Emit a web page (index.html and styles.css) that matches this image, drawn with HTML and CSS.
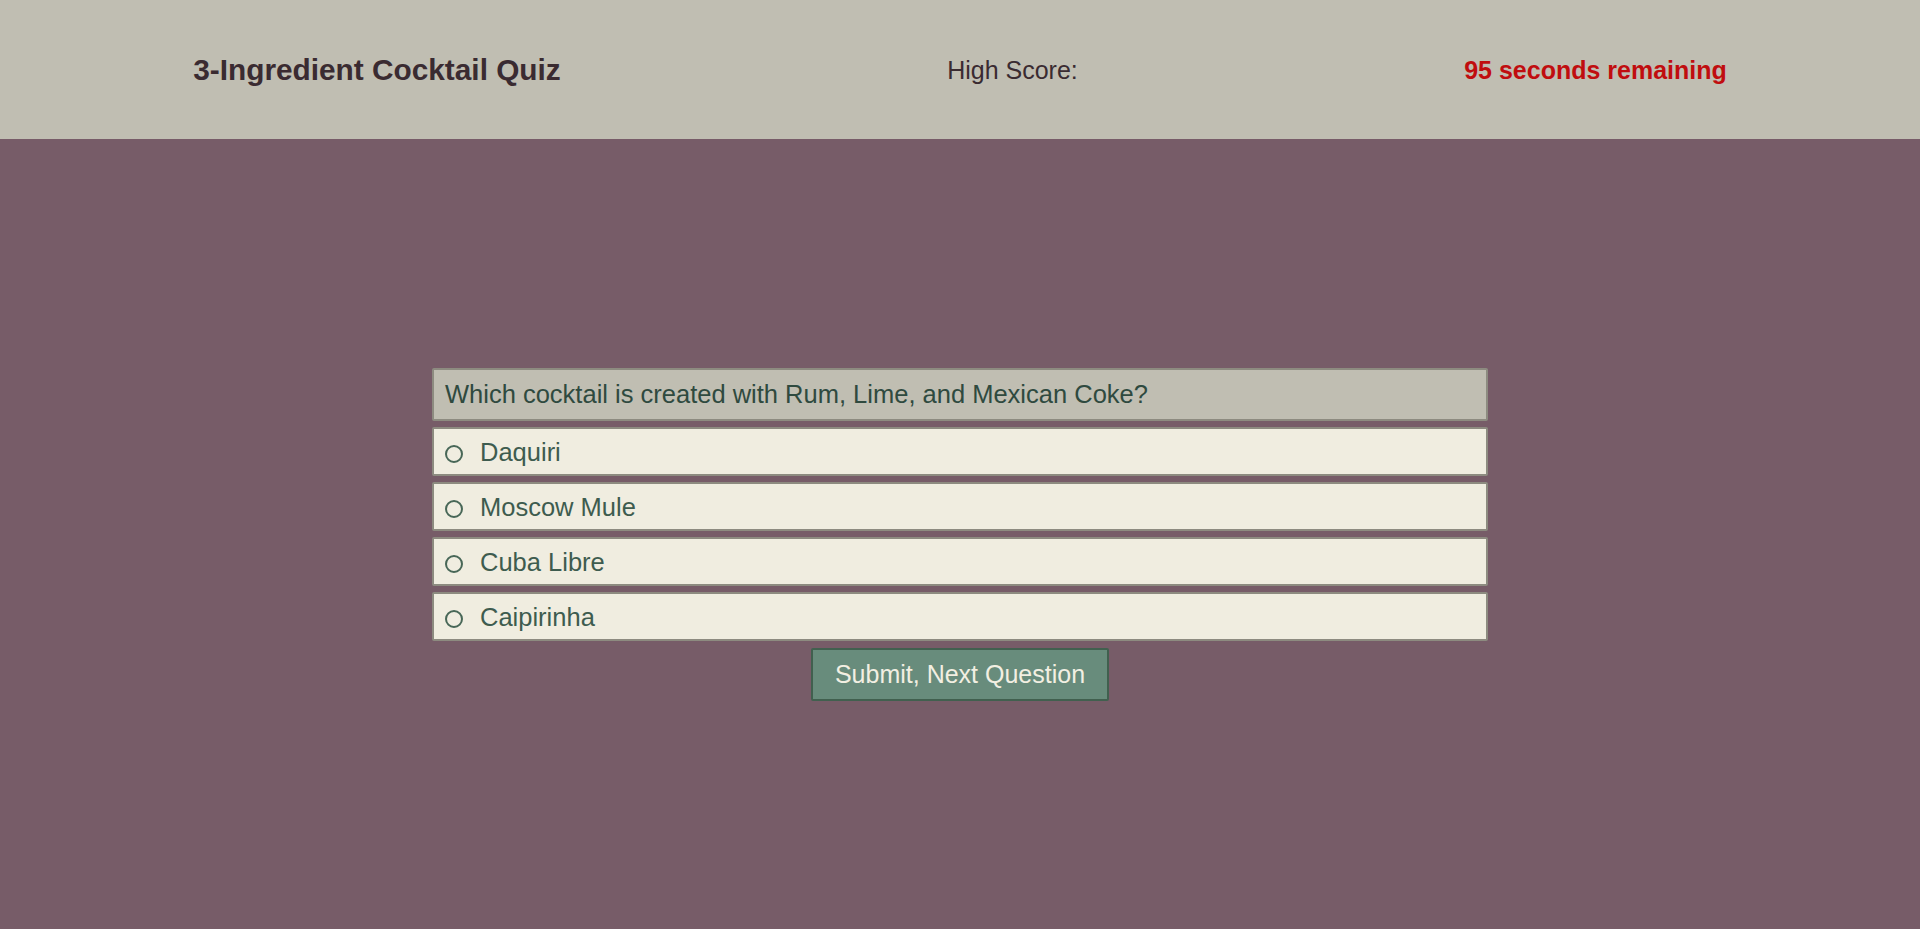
FILE: index.html
```html
<!DOCTYPE html>
<html lang="en">
<head>
<meta charset="utf-8">
<title>3-Ingredient Cocktail Quiz</title>
<link rel="stylesheet" href="styles.css">
</head>
<body>
<header class="top-bar">
  <h1 class="title">3-Ingredient Cocktail Quiz</h1>
  <div class="high-score">High Score:</div>
  <div class="timer">95 seconds remaining</div>
</header>
<main class="stage">
  <form class="quiz">
    <div class="question">Which cocktail is created with Rum, Lime, and Mexican Coke?</div>
    <label class="option"><input type="radio" name="answer" class="radio"><span>Daquiri</span></label>
    <label class="option"><input type="radio" name="answer" class="radio"><span>Moscow Mule</span></label>
    <label class="option"><input type="radio" name="answer" class="radio"><span>Cuba Libre</span></label>
    <label class="option"><input type="radio" name="answer" class="radio"><span>Caipirinha</span></label>
    <div class="actions"><button type="button" class="submit">Submit, Next Question</button></div>
  </form>
</main>
</body>
</html>
```

FILE: styles.css
```css
html, body {
  margin: 0;
  padding: 0;
}

body {
  font-family: "Liberation Sans", Arial, sans-serif;
  background: #775c68;
  min-height: 929px;
  height: 100vh;
  display: flex;
  flex-direction: column;
}

.top-bar {
  height: 139px;
  flex: 0 0 139px;
  box-sizing: border-box;
  padding-top: 2px;
  background: #c0beb2;
  display: flex;
  justify-content: space-around;
  align-items: center;
  color: #3a2b31;
}

.title {
  margin: 0;
  font-size: 29.8px;
  font-weight: bold;
  line-height: 1.15;
}

.high-score {
  font-size: 25px;
  line-height: 1.15;
}

.timer {
  font-size: 25px;
  font-weight: bold;
  line-height: 1.15;
  color: #c00d0f;
}

.stage {
  flex: 1;
  display: flex;
  justify-content: center;
  align-items: center;
}

.quiz {
  width: 55%;
  display: flex;
  flex-direction: column;
  gap: 6px;
}

.question {
  background: #c0beb2;
  border: 2px solid #8d8b80;
  border-radius: 2px;
  padding: 10px 12px 10px 11px;
  font-size: 25.5px;
  line-height: 29px;
  color: #2f4a3f;
}

.option {
  display: flex;
  align-items: center;
  background: #f0ede0;
  border: 2px solid #8d8b80;
  border-radius: 2px;
  padding: 9px 11px 7px 11px;
  font-size: 25.5px;
  line-height: 29px;
  color: #3e5c4f;
  cursor: pointer;
}

.radio {
  appearance: none;
  -webkit-appearance: none;
  width: 18px;
  height: 18px;
  margin: 3px 17px 0 0;
  border: 2px solid #486757;
  border-radius: 50%;
  background: transparent;
  box-sizing: border-box;
  flex: 0 0 18px;
}

.radio:checked {
  background: radial-gradient(circle, #486757 0 3.5px, transparent 4px);
}

.actions {
  display: flex;
  justify-content: center;
  padding-top: 1px;
}

.submit {
  font-family: "Liberation Sans", Arial, sans-serif;
  font-size: 25px;
  line-height: 29px;
  padding: 10px 22px;
  background: #688c7c;
  color: #f2efe2;
  border: 2px solid #41604f;
  border-radius: 2px;
  cursor: pointer;
}
```
